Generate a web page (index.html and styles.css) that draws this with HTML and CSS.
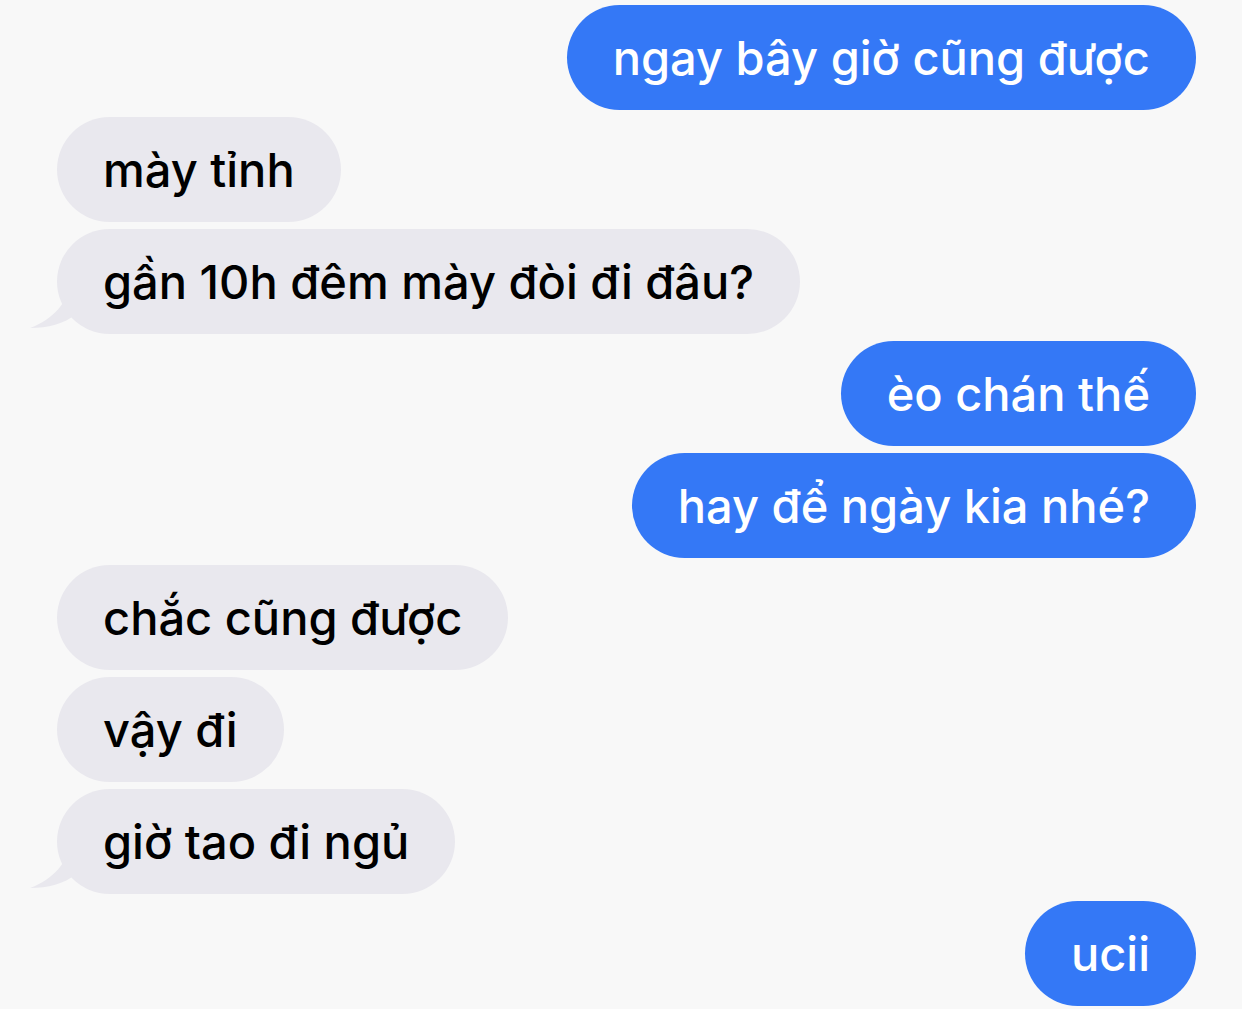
FILE: index.html
```html
<!DOCTYPE html>
<html lang="vi">
<head>
  <meta charset="UTF-8">
  <meta name="viewport" content="width=device-width, initial-scale=1.0">
  <title>Messages</title>
  <link rel="stylesheet" href="styles.css">
</head>
<body>
  <!-- Conversation -->
  <div class="thread">
    <div class="msg sent">ngay bây giờ cũng được</div>
    <div class="msg received">mày tỉnh</div>
    <div class="msg received tail">gần 10h đêm mày đòi đi đâu?
      <svg class="tail-shape" width="50" height="50" viewBox="0 0 50 50"><path d="M40 0 C40 22 22 40 0 48 C18 48 34 44 46 34 Z" fill="#e9e8ee"/></svg>
    </div>
    <div class="msg sent">èo chán thế</div>
    <div class="msg sent">hay để ngày kia nhé?</div>
    <div class="msg received">chắc cũng được</div>
    <div class="msg received">vậy đi</div>
    <div class="msg received tail">giờ tao đi ngủ
      <svg class="tail-shape" width="50" height="50" viewBox="0 0 50 50"><path d="M40 0 C40 22 22 40 0 48 C18 48 34 44 46 34 Z" fill="#e9e8ee"/></svg>
    </div>
    <div class="msg sent">ucii</div>
  </div>
</body>
</html>
```

FILE: styles.css
```css
/* Global Styles */
body {
  margin: 0;
  padding: 0;
  background-color: #f8f8f8;
  font-family: 'Inter', 'Noto Sans', sans-serif;
}

/* Thread */
.thread {
  display: flex;
  flex-direction: column;
  gap: 7px;
  padding: 5px 46px 0 57px;
}

.msg {
  position: relative;
  height: 105px;
  box-sizing: border-box;
  padding: 0 46px;
  display: flex;
  align-items: center;
  border-radius: 53px;
  font-size: 47px;
  font-weight: 500;
  line-height: 1;
  white-space: nowrap;
}

.sent {
  align-self: flex-end;
  background-color: #3478f6;
  color: white;
}

.received {
  align-self: flex-start;
  background-color: #e9e8ee;
  color: black;
}

/* Bubble tail */
.tail-shape {
  position: absolute;
  left: -27px;
  bottom: 4px;
}
```
